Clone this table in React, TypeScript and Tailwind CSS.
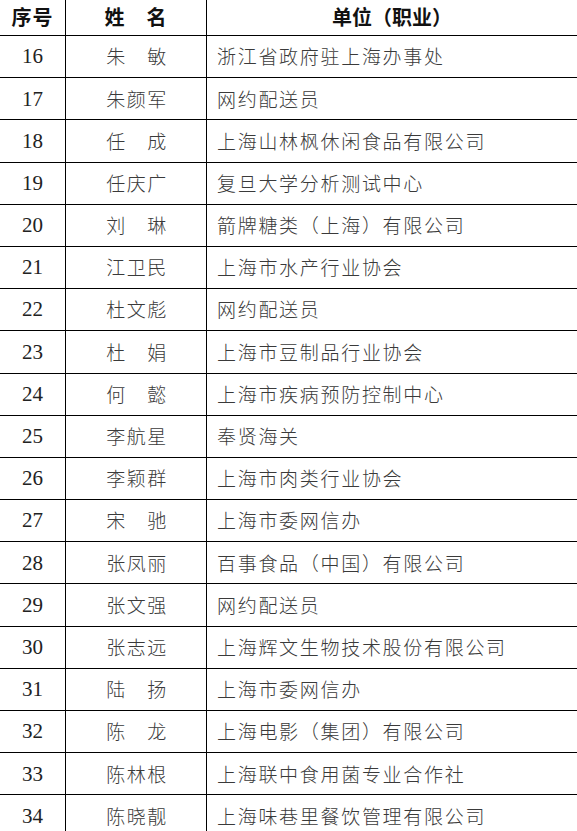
import React from "react";

const rows: [string, string, string][] = [
  ["16", "朱　敏", "浙江省政府驻上海办事处"],
  ["17", "朱颜军", "网约配送员"],
  ["18", "任　成", "上海山林枫休闲食品有限公司"],
  ["19", "任庆广", "复旦大学分析测试中心"],
  ["20", "刘　琳", "箭牌糖类（上海）有限公司"],
  ["21", "江卫民", "上海市水产行业协会"],
  ["22", "杜文彪", "网约配送员"],
  ["23", "杜　娟", "上海市豆制品行业协会"],
  ["24", "何　懿", "上海市疾病预防控制中心"],
  ["25", "李航星", "奉贤海关"],
  ["26", "李颖群", "上海市肉类行业协会"],
  ["27", "宋　驰", "上海市委网信办"],
  ["28", "张凤丽", "百事食品（中国）有限公司"],
  ["29", "张文强", "网约配送员"],
  ["30", "张志远", "上海辉文生物技术股份有限公司"],
  ["31", "陆　扬", "上海市委网信办"],
  ["32", "陈　龙", "上海电影（集团）有限公司"],
  ["33", "陈林根", "上海联中食用菌专业合作社"],
  ["34", "陈晓靓", "上海味巷里餐饮管理有限公司"],
];

const cjk = "font-['Noto_Sans_CJK_SC',sans-serif]";

export default function App() {
  return (
    <div className="w-[577px] h-[831px] overflow-hidden bg-white">
      <div className="grid grid-cols-[66px_141px_1fr] h-[36px] border-b border-black">
        <div className={`${cjk} border-r border-black flex items-center justify-center text-[20px] font-bold text-[#111] tracking-[1px] pb-[2px]`}>
          序号
        </div>
        <div className={`${cjk} border-r border-black flex items-center justify-center text-[20px] font-bold text-[#111] tracking-[1px] pb-[2px]`}>
          姓　名
        </div>
        <div className={`${cjk} flex items-center justify-center text-[20px] font-bold text-[#111] pb-[2px]`}>
          单位（职业）
        </div>
      </div>
      {rows.map(([no, name, unit]) => (
        <div
          key={no}
          className="grid grid-cols-[66px_141px_1fr] h-[42.2px] border-b border-black"
        >
          <div className="border-r border-black flex items-center justify-center font-['Liberation_Serif',serif] text-[21px] text-[#222] pt-[1px]">
            {no}
          </div>
          <div className={`${cjk} border-r border-black flex items-center justify-center text-[19px] font-light text-[#3a3a3a] tracking-[1.5px] pl-[2px]`}>
            {name}
          </div>
          <div className={`${cjk} flex items-center pl-[10px] text-[19px] font-light text-[#3a3a3a] tracking-[1.7px] whitespace-nowrap`}>
            {unit}
          </div>
        </div>
      ))}
    </div>
  );
}
